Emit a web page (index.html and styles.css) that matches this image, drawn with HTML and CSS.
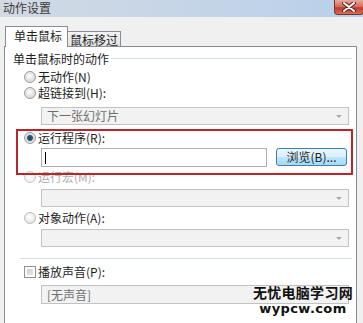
FILE: index.html
```html
<!DOCTYPE html>
<html lang="zh-CN">
<head>
    <meta charset="UTF-8">
    <meta name="viewport" content="width=device-width, initial-scale=1.0">
    <title>动作设置</title>
    <link rel="stylesheet" href="styles.css">
</head>
<body>
    <div class="titlebar">
        <span class="title">动作设置</span>
        <span class="close">
            <svg width="14" height="10" viewBox="0 0 14 10">
                <path d="M2 1 L12 9 M12 1 L2 9" stroke="#5a2019" stroke-width="4" stroke-linecap="round"/>
                <path d="M2 1 L12 9 M12 1 L2 9" stroke="#ffffff" stroke-width="2" stroke-linecap="round"/>
            </svg>
        </span>
    </div>
    <div class="tabs">
        <div class="tab active">单击鼠标</div>
        <div class="tab">鼠标移过</div>
    </div>
    <div class="panel">
        <div class="legend"><span>单击鼠标时的动作</span><i class="rule"></i></div>

        <div class="option first"><span class="radio"></span><span>无动作(N)</span></div>
        <div class="option"><span class="radio"></span><span>超链接到(H):</span></div>
        <div class="select"><span>下一张幻灯片</span><i class="arrow"></i></div>

        <div class="highlight">
            <div class="option"><span class="radio checked"></span><span>运行程序(R):</span></div>
            <div class="program-row">
                <div class="input"><i class="caret"></i></div>
                <div class="button">浏览(B)...</div>
            </div>
        </div>

        <div class="option disabled macro"><span class="radio"></span><span>运行宏(M):</span></div>
        <div class="select gap-sm"><span></span><i class="arrow"></i></div>

        <div class="option object"><span class="radio dim"></span><span>对象动作(A):</span></div>
        <div class="select gap-sm"><span></span><i class="arrow"></i></div>

        <div class="divider"></div>

        <div class="option sound"><span class="checkbox"></span><span>播放声音(P):</span></div>
        <div class="select sound-select"><span>[无声音]</span></div>
    </div>

    <div class="watermark">
        <div class="wm-cn">无忧电脑学习网</div>
        <div class="wm-en">wypcw.com</div>
    </div>
</body>
</html>
```

FILE: styles.css
```css
body {
    margin: 0;
    width: 363px;
    height: 323px;
    overflow: hidden;
    position: relative;
    background-color: #f0f0f0;
    font-family: "Noto Sans CJK SC", "Noto Sans", sans-serif;
    font-size: 12px;
    line-height: 14px;
    color: #1e1e1e;
}
.titlebar {
    height: 17px;
    display: flex;
    justify-content: space-between;
    background: linear-gradient(to right, #d2dae3, #c3d4e8 60%, #b9d0ea);
}
.title {
    padding-left: 3px;
    line-height: 16px;
    color: #3a3a3a;
}
.close {
    width: 30px;
    height: 15px;
    margin-right: -1px;
    box-sizing: border-box;
    border: 1px solid #7a3329;
    border-top: none;
    border-radius: 0 0 4px 4px;
    background: linear-gradient(#e9a99c, #d0695a 50%, #c0392b 55%, #d5705f);
    display: flex;
    align-items: center;
    justify-content: center;
}
.tabs {
    display: flex;
    align-items: flex-end;
    height: 20px;
    margin-top: 9px;
    padding-left: 5px;
    position: relative;
    z-index: 1;
}
.tab {
    box-sizing: border-box;
    height: 15px;
    width: 53px;
    border: 1px solid #898c95;
    border-left: none;
    border-bottom: none;
    background: linear-gradient(#f3f3f3, #e3e3e3);
    text-align: center;
    line-height: 16px;
}
.tab.active {
    width: 63px;
    height: 21px;
    margin-bottom: -1px;
    border-left: 1px solid #898c95;
    background: #fff;
    line-height: 17px;
    text-align: left;
    padding-left: 8px;
}
.panel {
    box-sizing: border-box;
    margin-left: 4px;
    width: 353px;
    height: 277px;
    border: 1px solid #898c95;
    border-bottom: none;
    background: #fff;
    padding-top: 4px;
}
.legend {
    display: flex;
    align-items: center;
    height: 15px;
    padding-left: 8px;
    padding-right: 4px;
}
.rule {
    flex: 1;
    height: 1px;
    margin-left: 2px;
    background: #d5dfe5;
}
.option {
    display: flex;
    align-items: center;
    gap: 2px;
    height: 16px;
    padding-left: 19px;
}
.option.first {
    margin-top: 3px;
}
.radio {
    box-sizing: border-box;
    width: 12px;
    height: 12px;
    border-radius: 50%;
    border: 1px solid #9a9a9a;
    background: radial-gradient(circle at 45% 40%, #ffffff 0, #e6e6e6 45%, #cfcfcf 100%);
}
.radio.checked {
    background: radial-gradient(circle, #1d3d5c 0, #2c5a84 2.5px, #dcdcdc 3.5px, #f2f2f2 100%);
}
.radio.dim {
    border-color: #bdbdbd;
    background: radial-gradient(circle at 45% 40%, #ffffff 0, #ececec 60%, #dadada 100%);
}
.checkbox {
    box-sizing: border-box;
    width: 12px;
    height: 12px;
    border: 1px solid #8f8f8f;
    background: #fff;
    padding: 2px;
    background-clip: content-box;
    background-image: linear-gradient(135deg, #c9c9c9, #eeeeee);
}
.select {
    box-sizing: border-box;
    margin-left: 36px;
    margin-top: 6px;
    width: 308px;
    height: 18px;
    border: 1px solid #c2c2c2;
    background: #f2f2f2;
    display: flex;
    align-items: center;
    justify-content: space-between;
    padding: 0 6px 0 5px;
    color: #6d6d6d;
}
.select.gap-sm {
    margin-top: 5px;
}
.arrow {
    width: 0;
    height: 0;
    border-left: 3px solid transparent;
    border-right: 3px solid transparent;
    border-top: 3px solid #a9a9a9;
}
.highlight {
    box-sizing: border-box;
    position: relative;
    z-index: 1;
    margin: 4px 0 0 11px;
    width: 337px;
    height: 46px;
    border: 2px solid #b8262b;
}
.highlight .option {
    height: 14px;
    padding-left: 6px;
}
.program-row {
    display: flex;
    align-items: flex-start;
    gap: 9px;
    margin-top: 3px;
    padding-left: 23px;
}
.input {
    box-sizing: border-box;
    width: 226px;
    height: 19px;
    border: 1px solid #abadb3;
    background: #fff;
    display: flex;
    align-items: center;
}
.caret {
    width: 1px;
    height: 12px;
    margin-left: 3px;
    background: #000;
}
.button {
    box-sizing: border-box;
    width: 71px;
    height: 18px;
    border: 1px solid #3c7fb1;
    border-radius: 3px;
    background: linear-gradient(#eaf6fd, #d9f0fc 50%, #bee6fd 50%, #a7d9f5);
    text-align: center;
    line-height: 15px;
    color: #1e1e1e;
}
.option.macro {
    margin-top: -5px;
    height: 14px;
}
.disabled {
    color: #adadad;
}
.disabled .radio {
    border-color: #c8c8c8;
    background: radial-gradient(circle at 45% 40%, #ffffff 0, #f0f0f0 60%, #e2e2e2 100%);
}
.option.object {
    margin-top: 4px;
    height: 14px;
}
.object + .select {
    margin-top: 4px;
}
.divider {
    margin: 11px 4px 0 15px;
    height: 1px;
    background: #d5dfe5;
}
.option.sound {
    margin-top: 6px;
    height: 14px;
}
.sound-select {
    height: 19px;
    color: #707070;
}
.watermark {
    position: absolute;
    right: 10px;
    top: 284px;
    white-space: nowrap;
    text-align: center;
    color: #111;
    font-weight: bold;
}
.wm-cn {
    font-size: 14px;
    line-height: 17px;
    letter-spacing: 0.3px;
}
.wm-en {
    font-family: "DejaVu Sans", sans-serif;
    font-size: 13px;
    line-height: 15px;
    letter-spacing: 0.4px;
}
```
